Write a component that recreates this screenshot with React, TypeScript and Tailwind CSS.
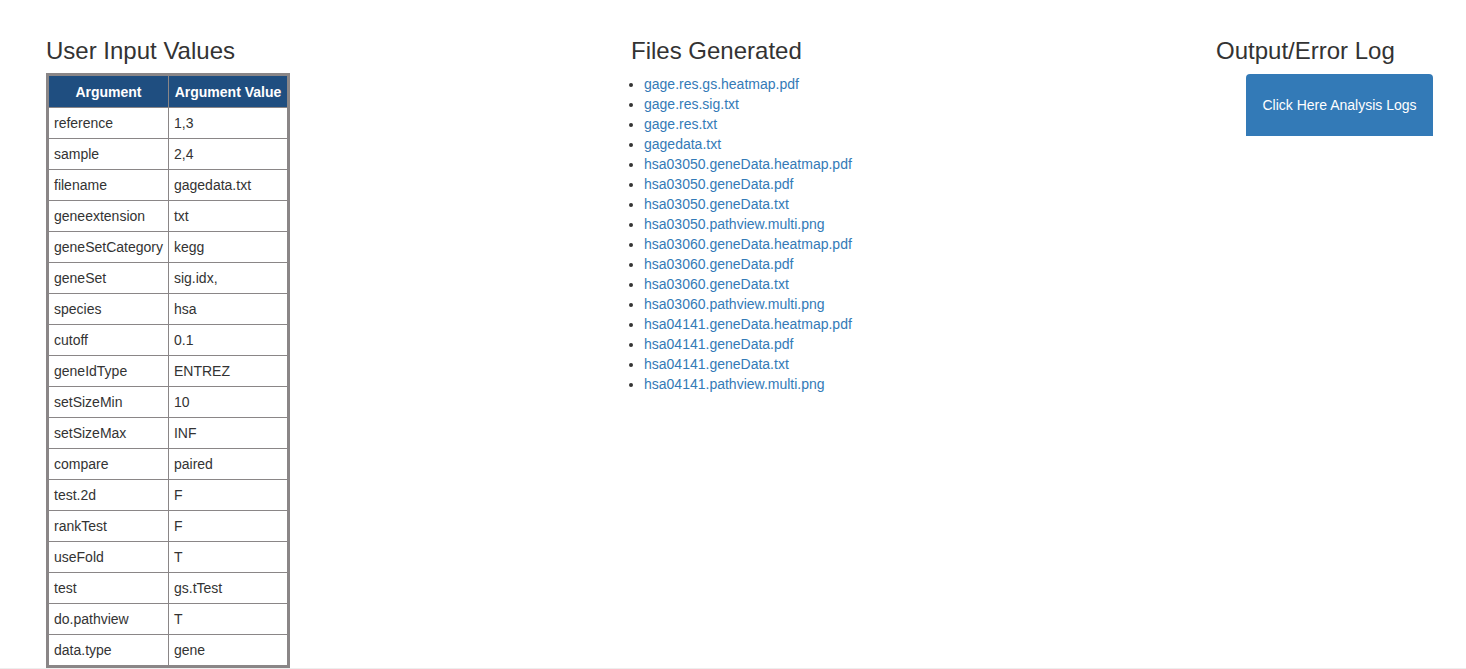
const args: [string, string][] = [
  ['reference', '1,3'],
  ['sample', '2,4'],
  ['filename', 'gagedata.txt'],
  ['geneextension', 'txt'],
  ['geneSetCategory', 'kegg'],
  ['geneSet', 'sig.idx,'],
  ['species', 'hsa'],
  ['cutoff', '0.1'],
  ['geneIdType', 'ENTREZ'],
  ['setSizeMin', '10'],
  ['setSizeMax', 'INF'],
  ['compare', 'paired'],
  ['test.2d', 'F'],
  ['rankTest', 'F'],
  ['useFold', 'T'],
  ['test', 'gs.tTest'],
  ['do.pathview', 'T'],
  ['data.type', 'gene'],
]

const files = [
  'gage.res.gs.heatmap.pdf',
  'gage.res.sig.txt',
  'gage.res.txt',
  'gagedata.txt',
  'hsa03050.geneData.heatmap.pdf',
  'hsa03050.geneData.pdf',
  'hsa03050.geneData.txt',
  'hsa03050.pathview.multi.png',
  'hsa03060.geneData.heatmap.pdf',
  'hsa03060.geneData.pdf',
  'hsa03060.geneData.txt',
  'hsa03060.pathview.multi.png',
  'hsa04141.geneData.heatmap.pdf',
  'hsa04141.geneData.pdf',
  'hsa04141.geneData.txt',
  'hsa04141.pathview.multi.png',
]

export default function App() {
  return (
    <div className="min-h-[669px] bg-white font-['Liberation_Sans',Arial,sans-serif] text-[14px] leading-[20px] text-[#333]">
      <div className="relative z-10 flex pl-[46px]">
        {/* user input values */}
        <div className="w-[585px] shrink-0">
          <h3 className="mt-[38px] mb-[9px] text-[24px] leading-[26.4px] font-normal">User Input Values</h3>
          <div className="w-[244px] border-[3px] border-[#8a8687]">
            <table className="w-full border-collapse">
              <thead>
                <tr className="bg-[#1f4e80] text-white">
                  <th className="h-[31px] w-[119px] border-r border-b border-[#8a8687] p-0 text-center font-bold">Argument</th>
                  <th className="h-[31px] border-b border-[#8a8687] p-0 text-center font-bold">Argument Value</th>
                </tr>
              </thead>
              <tbody>
                {args.map(([k, v], i) => (
                  <tr key={k}>
                    <td className={`h-[31px] border-r border-[#8a8687] px-[5px] py-0 ${i < args.length - 1 ? 'border-b' : ''}`}>{k}</td>
                    <td className={`h-[31px] border-[#8a8687] px-[5px] py-0 ${i < args.length - 1 ? 'border-b' : ''}`}>{v}</td>
                  </tr>
                ))}
              </tbody>
            </table>
          </div>
        </div>

        {/* files */}
        <div className="w-[585px] shrink-0">
          <h3 className="mt-[38px] mb-[10px] text-[24px] leading-[26.4px] font-normal">Files Generated</h3>
          <ul className="list-disc pl-[13px]">
            {files.map((f) => (
              <li key={f}>
                <a href="#" className="text-[#337ab7] hover:underline">{f}</a>
              </li>
            ))}
          </ul>
        </div>

        {/* log */}
        <div className="shrink-0">
          <h3 className="mt-[38px] mb-[10px] text-[24px] leading-[26.4px] font-normal">Output/Error Log</h3>
          <button className="mt-[2px] ml-[30px] flex h-[62px] w-[187px] items-center justify-center rounded-t-[4px] bg-[#337ab7] text-white">
            Click Here Analysis Logs
          </button>
        </div>
      </div>
      <div className="border-t-2 border-[#eeeeee]" />
    </div>
  )
}
